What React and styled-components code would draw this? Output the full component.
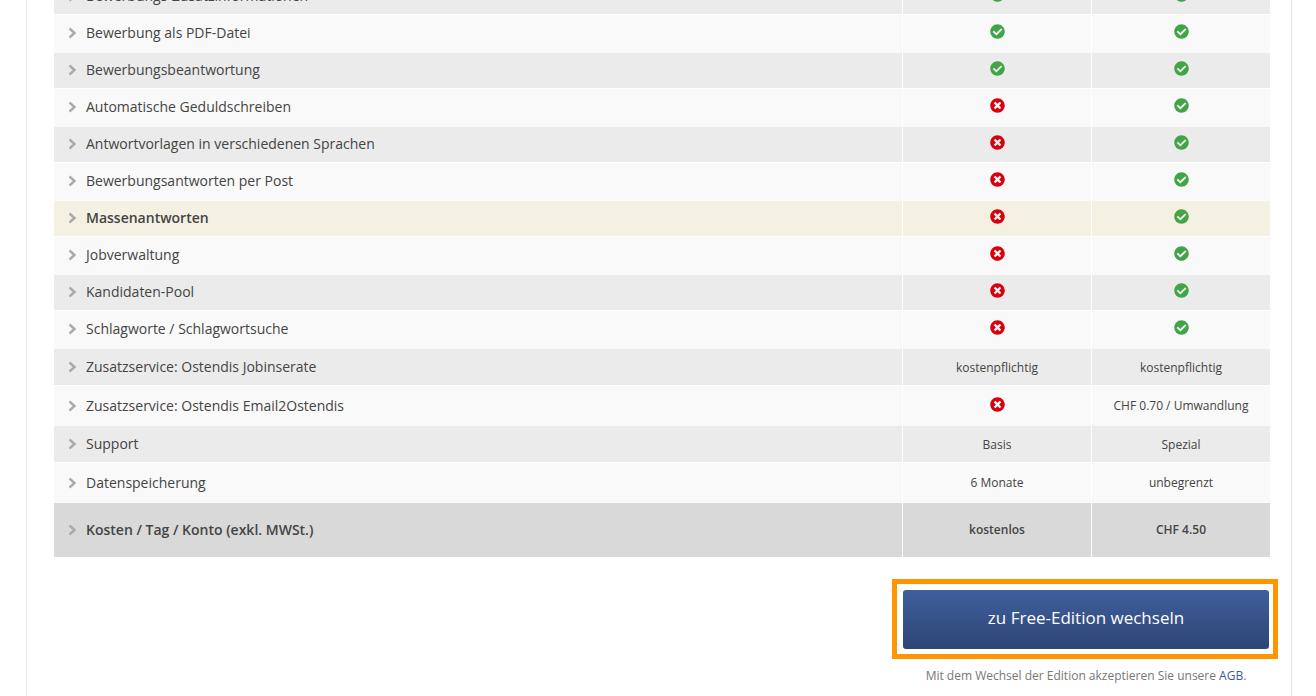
import React from "react";
import styled, { createGlobalStyle } from "styled-components";
import { FaCheckCircle, FaTimesCircle } from "react-icons/fa";

const GlobalStyle = createGlobalStyle`
  html, body {
    margin: 0;
    height: 696px;
    overflow: hidden;
    background: #fff;
    font-family: "Open Sans", "Liberation Sans", sans-serif;
    color: #444;
  }
`;

const Card = styled.div`
  box-sizing: border-box;
  width: 1266px;
  height: 740px;
  margin: -22px 0 0 26px;
  padding: 0 21px 0 27px;
  border-left: 1px solid #e6e6e6;
  border-right: 1px solid #e6e6e6;
`;

const Row = styled.div`
  display: grid;
  grid-template-columns: 848px 189px 179px;
  box-sizing: border-box;
  height: ${(p) => p.$h}px;
  background: ${(p) =>
    p.$kind === "total" ? "#d9d9d9" : p.$kind === "mark" ? "#f4f1e2" : p.$kind === "dark" ? "#ebebeb" : "#f9f9f9"};
  border-bottom: 1px solid ${(p) => (p.$kind === "light" ? "#f9f9f9" : "#fff")};
  &:last-child {
    border-bottom: 0;
  }
`;

const Label = styled.div`
  display: flex;
  align-items: flex-start;
  padding-top: ${(p) => p.$pt}px;
  font-size: 14px;
  line-height: 20px;
  font-weight: ${(p) => (p.$bold ? 600 : 400)};
`;

const Arrow = styled.svg`
  flex: none;
  width: 9px;
  height: 12px;
  margin: 4px 9px 0 14px;
`;

const Cell = styled.div`
  display: flex;
  justify-content: center;
  align-items: flex-start;
  padding-top: ${(p) => p.$pt}px;
  border-left: 1px solid #fff;
  font-size: 12px;
  line-height: 20px;
  font-weight: ${(p) => (p.$bold ? 600 : 400)};
`;

const Mark = styled.span`
  display: flex;
  margin-top: 1px;
  font-size: 15px;
  color: ${(p) => (p.$ok ? "#41a548" : "#d8000c")};
`;

const Action = styled.div`
  display: flex;
  flex-direction: column;
  align-items: center;
  width: 386px;
  margin: 21px -8px 0 auto;
`;

const Frame = styled.div`
  box-sizing: border-box;
  width: 386px;
  height: 80px;
  padding: 6px 4px 5px 6px;
  border: 5px solid #ff9500;
`;

const SwitchButton = styled.button`
  display: block;
  width: 100%;
  height: 59px;
  padding: 0 0 4px;
  border: 0;
  border-radius: 3px;
  background: linear-gradient(#3e5f9d, #2f4575);
  color: #fff;
  font-family: inherit;
  font-size: 17px;
`;

const Terms = styled.p`
  margin: 8px 0 0;
  padding-left: 2px;
  font-size: 12px;
  line-height: 18px;
  color: #777;
`;

const TermsLink = styled.a`
  color: #3b5a98;
  text-decoration: none;
`;

const rows = [
  { name: "Bewerbungs-Zusatzinformationen", h: 37, pt: 8, kind: "dark", a: "ok", b: "ok" },
  { name: "Bewerbung als PDF-Datei", h: 38, pt: 8, kind: "light", a: "ok", b: "ok" },
  { name: "Bewerbungsbeantwortung", h: 36, pt: 7, kind: "dark", a: "ok", b: "ok" },
  { name: "Automatische Geduldschreiben", h: 38, pt: 8, kind: "light", a: "no", b: "ok" },
  { name: "Antwortvorlagen in verschiedenen Sprachen", h: 36, pt: 7, kind: "dark", a: "no", b: "ok" },
  { name: "Bewerbungsantworten per Post", h: 38, pt: 8, kind: "light", a: "no", b: "ok" },
  { name: "Massenantworten", h: 36, pt: 7, kind: "mark", bold: true, a: "no", b: "ok" },
  { name: "Jobverwaltung", h: 38, pt: 8, kind: "light", a: "no", b: "ok" },
  { name: "Kandidaten-Pool", h: 36, pt: 7, kind: "dark", a: "no", b: "ok" },
  { name: "Schlagworte / Schlagwortsuche", h: 38, pt: 8, kind: "light", a: "no", b: "ok" },
  { name: "Zusatzservice: Ostendis Jobinserate", h: 37, pt: 8, cellPt: 9, kind: "dark", a: "kostenpflichtig", b: "kostenpflichtig" },
  { name: "Zusatzservice: Ostendis Email2Ostendis", h: 40, pt: 10, kind: "light", a: "no", b: "CHF 0.70 / Umwandlung" },
  { name: "Support", h: 37, pt: 8, cellPt: 9, kind: "dark", a: "Basis", b: "Spezial" },
  { name: "Datenspeicherung", h: 40, pt: 10, kind: "light", a: "6 Monate", b: "unbegrenzt" },
  { name: "Kosten / Tag / Konto (exkl. MWSt.)", h: 55, pt: 17, kind: "total", bold: true, a: "kostenlos", b: "CHF 4.50" },
];

const renderValue = (value) => {
  if (value === "ok")
    return (
      <Mark $ok>
        <FaCheckCircle />
      </Mark>
    );
  if (value === "no")
    return (
      <Mark>
        <FaTimesCircle />
      </Mark>
    );
  return value;
};

const App = () => (
  <>
    <GlobalStyle />
    <Card>
      {rows.map((row) => (
        <Row key={row.name} $h={row.h} $kind={row.kind}>
          <Label $pt={row.pt} $bold={row.bold}>
            <Arrow viewBox="0 0 9 12">
              <polyline points="1.5,1.5 6.5,6 1.5,10.5" fill="none" stroke="#aaa" strokeWidth="2.4" />
            </Arrow>
            {row.name}
          </Label>
          <Cell $pt={row.cellPt || row.pt} $bold={row.bold}>{renderValue(row.a)}</Cell>
          <Cell $pt={row.cellPt || row.pt} $bold={row.bold}>{renderValue(row.b)}</Cell>
        </Row>
      ))}
      <Action>
        <Frame>
          <SwitchButton>zu Free-Edition wechseln</SwitchButton>
        </Frame>
        <Terms>
          Mit dem Wechsel der Edition akzeptieren Sie unsere <TermsLink href="#">AGB</TermsLink>.
        </Terms>
      </Action>
    </Card>
  </>
);

export default App;
